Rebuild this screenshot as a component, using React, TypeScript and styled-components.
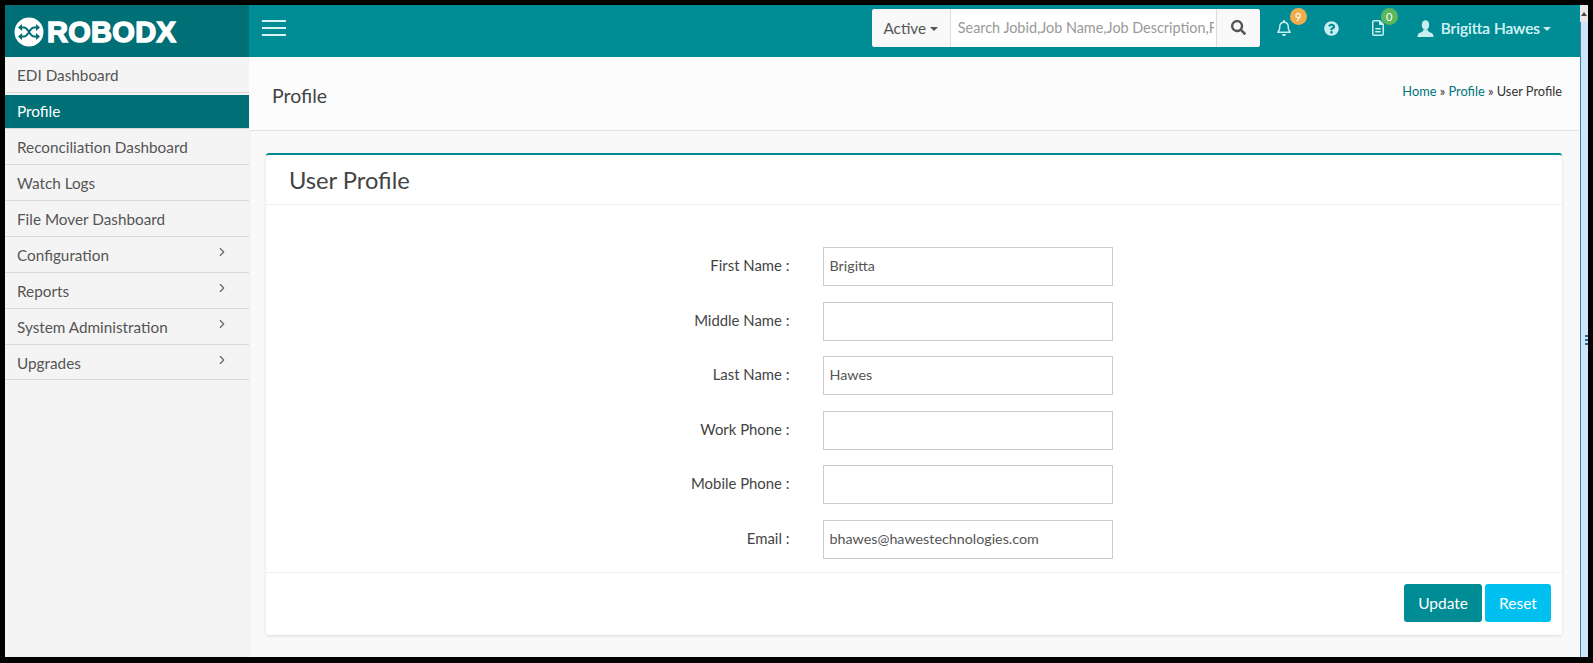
import { createGlobalStyle, styled } from 'styled-components';
import { FaQuestionCircle, FaSearch } from 'react-icons/fa';
import { FaRegBell, FaRegFileLines } from 'react-icons/fa6';
import { FiChevronRight } from 'react-icons/fi';

const GlobalStyle = createGlobalStyle`
  html, body {
    margin: 0;
    padding: 0;
    background: #000;
  }
  * {
    box-sizing: border-box;
  }
`;

const menuItems = [
  { label: 'EDI Dashboard' },
  { label: 'Profile', active: true },
  { label: 'Reconciliation Dashboard' },
  { label: 'Watch Logs' },
  { label: 'File Mover Dashboard' },
  { label: 'Configuration', arrow: true },
  { label: 'Reports', arrow: true },
  { label: 'System Administration', arrow: true },
  { label: 'Upgrades', arrow: true },
];

const fields = [
  { label: 'First Name :', value: 'Brigitta' },
  { label: 'Middle Name :', value: '' },
  { label: 'Last Name :', value: 'Hawes' },
  { label: 'Work Phone :', value: '' },
  { label: 'Mobile Phone :', value: '' },
  { label: 'Email :', value: 'bhawes@hawestechnologies.com' },
];

function Logo() {
  return (
    <LogoBox>
      <svg width="30" height="30" viewBox="0 0 30 30">
        <circle cx="15" cy="15" r="14.5" fill="#fff" />
        <path
          d="M7 10.500h3c4.500 0 5.500 9 10 9h3M7 19.500h3c4.500 0 5.500-9 10-9h3"
          fill="none"
          stroke="#006f76"
          strokeWidth="2"
        />
        <path
          d="M8 7v7l-4-3.500zM8 16v7l-4-3.500zM22 7v7l4-3.500zM22 16v7l4-3.500z"
          fill="#006f76"
        />
      </svg>
      <LogoText>ROBODX</LogoText>
    </LogoBox>
  );
}

function UserIcon() {
  return (
    <svg width="17" height="17" viewBox="0 0 17 17" fill="currentColor">
      <ellipse cx="8.500" cy="5" rx="3.700" ry="4.800" />
      <path d="M6.500 9.500c-.3 1.800-1.500 2.500-3.500 3.200C1.500 13.200.5 14 .5 17h16c0-3-1-3.800-2.500-4.300-2-.7-3.200-1.400-3.500-3.200z" />
    </svg>
  );
}

export default function App() {
  return (
    <Screen>
      <GlobalStyle />
      <Frame>
        <Window>
          <TopBar>
            <Logo />
            <TopBarMain>
              <Hamburger>
                <span />
                <span />
                <span />
              </Hamburger>
              <SearchGroup>
                <StatusButton>
                  Active
                  <Caret />
                </StatusButton>
                <SearchInput
                  readOnly
                  placeholder="Search Jobid,Job Name,Job Description,Flow Name"
                />
                <SearchButton>
                  <FaSearch size={15} />
                </SearchButton>
              </SearchGroup>
              <IconLink>
                <FaRegBell size={16} />
                <Badge $color="#f0ad4e" $left={29}>
                  9
                </Badge>
              </IconLink>
              <IconLink>
                <FaQuestionCircle size={15} />
              </IconLink>
              <IconLink>
                <FaRegFileLines size={16} />
                <Badge $color="#5cb85c" $left={26}>
                  0
                </Badge>
              </IconLink>
              <UserMenu>
                <UserIcon />
                <UserName>Brigitta Hawes</UserName>
                <Caret />
              </UserMenu>
            </TopBarMain>
          </TopBar>
          <Body>
            <Sidebar>
              {menuItems.map((item) => (
                <MenuItem key={item.label} $active={item.active}>
                  {item.label}
                  {item.arrow && (
                    <MenuArrow>
                      <FiChevronRight size={14} />
                    </MenuArrow>
                  )}
                </MenuItem>
              ))}
            </Sidebar>
            <Content>
              <PageHeader>
                <PageTitle>Profile</PageTitle>
                <Breadcrumb>
                  <a>Home</a> » <a>Profile</a> » User Profile
                </Breadcrumb>
              </PageHeader>
              <Card>
                <CardTitle>User Profile</CardTitle>
                <Form>
                  {fields.map((field) => (
                    <FormRow key={field.label}>
                      <FieldLabel>{field.label}</FieldLabel>
                      <FieldInput readOnly value={field.value} />
                    </FormRow>
                  ))}
                </Form>
                <CardFooter>
                  <ActionButton $color="#008c95">Update</ActionButton>
                  <ActionButton $color="#00c0ef">Reset</ActionButton>
                </CardFooter>
              </Card>
            </Content>
          </Body>
        </Window>
        <ScrollBar>
          <ScrollArrow />
          <ScrollThumb>
            <Grip />
          </ScrollThumb>
        </ScrollBar>
      </Frame>
    </Screen>
  );
}

const Screen = styled.div`
  width: 1593px;
  height: 663px;
  padding: 5px 5px 6px 5px;
  background: #000;
  font-family: Lato, 'Liberation Sans', sans-serif;
  font-size: 15.3px;
  color: #444;
  overflow: hidden;
`;

const Frame = styled.div`
  display: flex;
  height: 100%;
`;

const Window = styled.div`
  width: 1575px;
  display: flex;
  flex-direction: column;
  background: #f9f9f9;
`;

const TopBar = styled.div`
  display: flex;
  height: 52px;
  flex-shrink: 0;
`;

const LogoBox = styled.div`
  width: 244px;
  display: flex;
  align-items: center;
  gap: 3px;
  padding: 2px 0 0 9px;
  background: #006f76;
`;

const LogoText = styled.span`
  font-family: 'Liberation Sans', Arial, sans-serif;
  font-weight: 700;
  font-size: 29px;
  letter-spacing: 0.3px;
  color: #fff;
  -webkit-text-stroke: 1.5px #fff;
`;

const TopBarMain = styled.div`
  flex: 1;
  display: flex;
  align-items: center;
  padding: 0 29px 6px 13px;
  background: #008c95;
  color: #c9eef0;
`;

const Hamburger = styled.div`
  width: 24px;
  display: flex;
  flex-direction: column;
  gap: 5px;
  margin-right: auto;

  span {
    height: 2px;
    background: #d9f3f4;
  }
`;

const SearchGroup = styled.div`
  display: flex;
  width: 388px;
  height: 38px;
  margin: -1px 1px 0 0;
  background: #fff;
  border-radius: 3px;
  overflow: hidden;
`;

const StatusButton = styled.div`
  width: 79px;
  display: flex;
  align-items: center;
  justify-content: center;
  gap: 4px;
  background: #f9f9f9;
  border-right: 1px solid #ddd;
  color: #555;
  font-size: 15.3px;
`;

const Caret = styled.span`
  width: 0;
  height: 0;
  margin-top: 2px;
  border-left: 4px solid transparent;
  border-right: 4px solid transparent;
  border-top: 4px solid currentColor;
`;

const SearchInput = styled.input`
  flex: 1;
  min-width: 0;
  border: 0;
  outline: 0;
  padding: 0 2px 0 7px;
  font: inherit;
  font-size: 14.4px;
  color: #555;

  &::placeholder {
    color: #999;
    opacity: 1;
  }
`;

const SearchButton = styled.div`
  width: 44px;
  display: flex;
  align-items: center;
  justify-content: center;
  background: #f9f9f9;
  border-left: 1px solid #ddd;
  color: #555;
`;

const IconLink = styled.div`
  position: relative;
  width: 47px;
  display: flex;
  justify-content: center;
`;

const Badge = styled.span<{ $color: string; $left: number }>`
  position: absolute;
  top: -12px;
  left: ${(p) => p.$left}px;
  width: 17px;
  height: 17px;
  display: flex;
  align-items: center;
  justify-content: center;
  border-radius: 50%;
  background: ${(p) => p.$color};
  color: #fff;
  font-size: 11px;
`;

const UserMenu = styled.div`
  display: flex;
  align-items: center;
  margin-left: 15px;
`;

const UserName = styled.span`
  margin: 0 3px 0 7px;
  font-size: 15.4px;
  font-weight: 500;
  text-shadow: 0 0 0.5px #c9eef0;
`;

const Body = styled.div`
  flex: 1;
  display: flex;
  min-height: 0;
`;

const Sidebar = styled.div`
  width: 243.5px;
  flex-shrink: 0;
  background: #f4f4f4;
  box-shadow: 1px 0 2px rgba(0, 0, 0, 0.05);
`;

const MenuItem = styled.div<{ $active?: boolean }>`
  position: relative;
  height: 35.95px;
  display: flex;
  align-items: center;
  padding: 2px 0 0 12px;
  background: ${(p) => (p.$active ? '#006f76' : 'transparent')};
  border-bottom: 1px solid #d9d9d9;
  box-shadow: ${(p) => (p.$active ? 'inset 0 2px 0 #f4f4f4' : 'none')};
  color: ${(p) => (p.$active ? '#fff' : '#555')};
`;

const MenuArrow = styled.span`
  position: absolute;
  top: 7px;
  right: 20px;
  color: #666;
`;

const Content = styled.div`
  flex: 1;
  display: flex;
  flex-direction: column;
  min-width: 0;
`;

const PageHeader = styled.div`
  height: 74px;
  flex-shrink: 0;
  display: flex;
  align-items: center;
  justify-content: space-between;
  padding: 0 18px 0 23.5px;
  background: #fcfcfc;
  border-bottom: 1px solid #e4e4e4;
`;

const PageTitle = styled.h1`
  margin: 4px 0 0;
  font-size: 19.5px;
  font-weight: 400;
  color: #444;
`;

const Breadcrumb = styled.div`
  margin-top: -6px;
  font-size: 12.8px;
  color: #333;

  a {
    color: #00737b;
  }
`;

const Card = styled.div`
  margin: 22px 18px 0 17.5px;
  background: #fff;
  border-top: 2px solid #008c95;
  border-radius: 3px;
  box-shadow: 0 1px 3px rgba(0, 0, 0, 0.12);
`;

const CardTitle = styled.h2`
  height: 50px;
  margin: 0;
  padding: 0 23px;
  display: flex;
  align-items: center;
  font-size: 23.7px;
  font-weight: 400;
  color: #444;
  border-bottom: 1px solid #f0f0f0;
`;

const Form = styled.div`
  display: flex;
  flex-direction: column;
  gap: 15.5px;
  padding: 42px 0 13px 0;
`;

const FormRow = styled.div`
  display: flex;
  align-items: center;
`;

const FieldLabel = styled.label`
  width: 523.5px;
  margin-top: -3px;
  text-align: right;
  font-size: 14.9px;
  color: #444;
`;

const FieldInput = styled.input`
  width: 290px;
  height: 39px;
  margin-left: 33px;
  padding: 0 6px 2px;
  border: 1px solid #ccc;
  outline: 0;
  font: inherit;
  font-size: 14.3px;
  color: #555;
`;

const CardFooter = styled.div`
  display: flex;
  justify-content: flex-end;
  gap: 3px;
  padding: 11px 11px 3px;
  border-top: 1px solid #f0f0f0;
  height: 63px;
`;

const ActionButton = styled.button<{ $color: string }>`
  height: 38px;
  padding: 0 14px;
  min-width: 66px;
  border: 0;
  border-radius: 3px;
  background: ${(p) => p.$color};
  color: #fff;
  font: inherit;
  font-size: 15.5px;
`;

const ScrollBar = styled.div`
  flex: 1;
  display: flex;
  flex-direction: column;
  background: #f0f0f0;
`;

const ScrollArrow = styled.div`
  height: 17px;
  display: flex;
  align-items: center;
  justify-content: center;
  background: #e9e9e9;

  &::after {
    content: '';
    border-left: 3px solid transparent;
    border-right: 3px solid transparent;
    border-bottom: 4px solid #444;
  }
`;

const ScrollThumb = styled.div`
  flex: 1;
  display: flex;
  align-items: center;
  justify-content: flex-end;
  background: #cfe6fa;
  border-left: 1px solid #3c7fb1;
`;

const Grip = styled.div`
  width: 3px;
  height: 11px;
  margin-top: 2px;
  background: repeating-linear-gradient(to bottom, #2b6a8f 0 2px, transparent 2px 4px);
`;
